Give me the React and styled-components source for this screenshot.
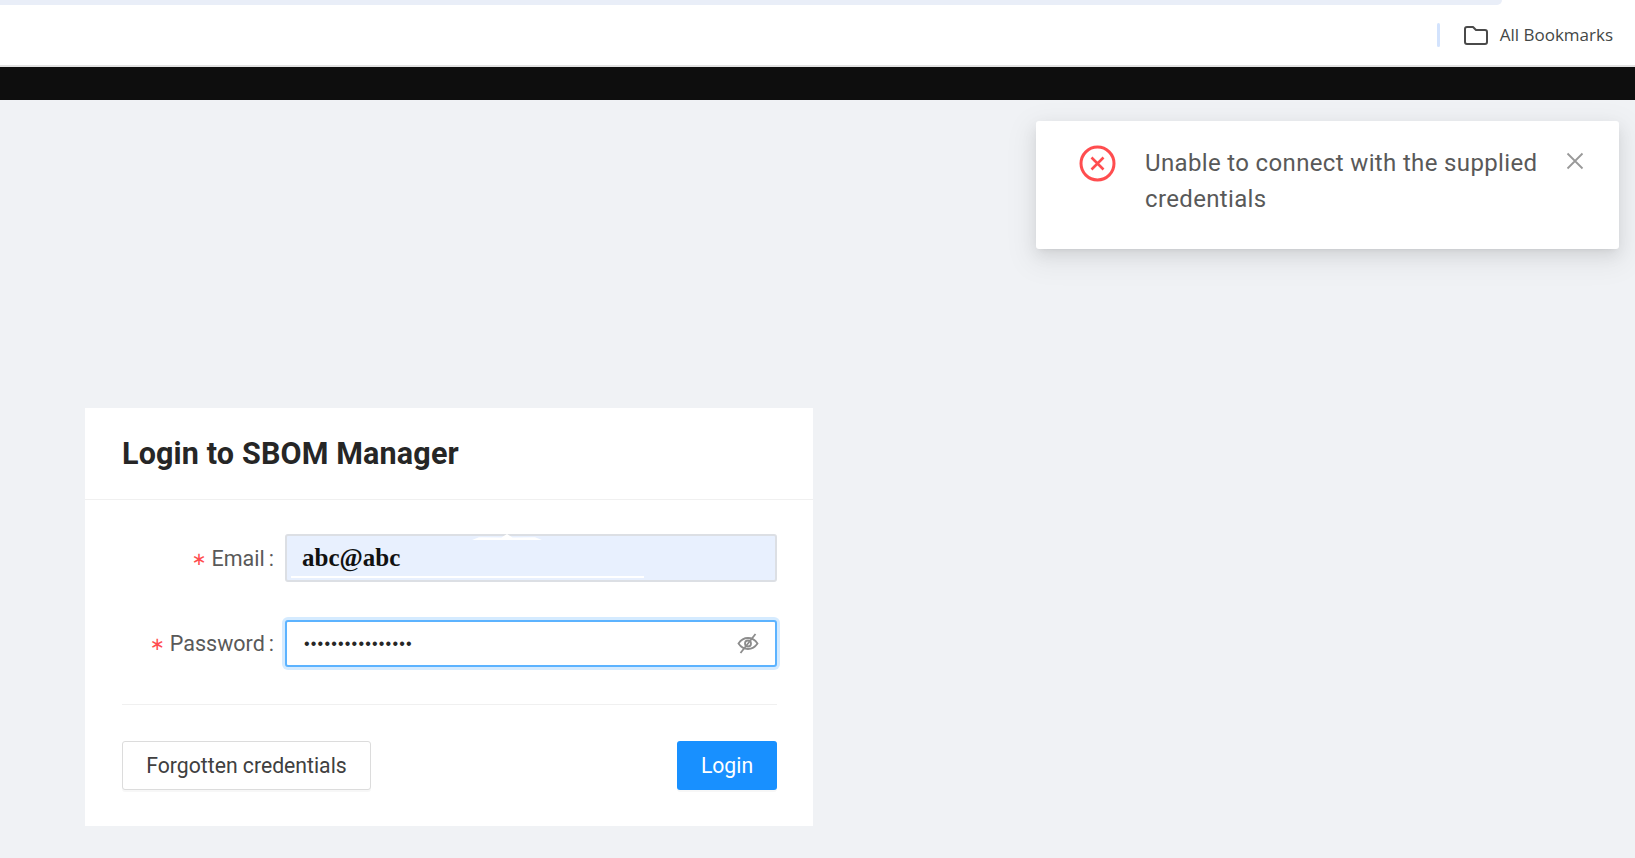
import React from "react";
import styled, { createGlobalStyle } from "styled-components";

const GlobalStyle = createGlobalStyle`
  html, body {
    margin: 0;
    padding: 0;
    background: #f0f2f5;
    font-family: Roboto, "Liberation Sans", sans-serif;
  }
  * {
    box-sizing: border-box;
  }
`;

const Page = styled.div`
  position: relative;
  width: 100%;
  min-height: 858px;
  overflow: hidden;
  background: #f0f2f5;
`;

const BrowserBar = styled.div`
  height: 67px;
  background: #fff;
  border-bottom: 2px solid #e2e2e2;
`;

const TabStrip = styled.div`
  width: 1502px;
  height: 5px;
  background: #e9eef8;
  border-bottom-right-radius: 14px;
`;

const BookmarkRow = styled.div`
  display: flex;
  justify-content: flex-end;
  align-items: center;
  height: 60px;
  padding-right: 22px;
`;

const Separator = styled.div`
  width: 3px;
  height: 24px;
  margin-right: 24px;
  border-radius: 2px;
  background: #d3e3fd;
`;

const BookmarkText = styled.span`
  margin-left: 12px;
  margin-bottom: 2px;
  font-family: "Open Sans", "Noto Sans", sans-serif;
  font-size: 17px;
  color: #444746;
`;

const BlackBar = styled.div`
  height: 33px;
  background: #0e0e0e;
`;

const Main = styled.main`
  padding: 308px 0 32px 85px;
`;

const Card = styled.section`
  width: 728px;
  background: #fff;
`;

const CardHeader = styled.header`
  display: flex;
  align-items: center;
  height: 92px;
  padding: 0 36px 0 37px;
  border-bottom: 1px solid #f0f0f0;
`;

const Title = styled.h1`
  margin: 0;
  font-size: 30.5px;
  font-weight: 700;
  letter-spacing: 0.15px;
  color: #262626;
`;

const CardBody = styled.div`
  padding: 34px 36px 36px 37px;
`;

const FormRow = styled.div`
  display: flex;
  align-items: center;
  gap: 11px;
  margin-bottom: ${(p) => (p.$last ? "37px" : "38px")};
`;

const Label = styled.label`
  flex: 0 0 152px;
  text-align: right;
  font-size: 21.5px;
  color: #595959;
`;

const Star = styled.span`
  margin-right: 5px;
  font-family: "DejaVu Sans", sans-serif;
  font-size: 18px;
  vertical-align: 1px;
  color: #ff4d4f;
`;

const Colon = styled.span`
  margin-left: 4px;
`;

const EmailField = styled.div`
  position: relative;
  flex: 1;
  height: 48px;
  background: #e8f0fe;
  border: 2px solid #dcdfe4;
  border-radius: 3px;

  /* white smudges left on the autofilled field */
  &::before {
    content: "";
    position: absolute;
    top: -2px;
    left: 185px;
    width: 70px;
    height: 6px;
    background: #fff;
    clip-path: polygon(0 100%, 10% 55%, 42% 60%, 50% 0, 58% 60%, 90% 55%, 100% 100%);
  }
  &::after {
    content: "";
    position: absolute;
    left: 4px;
    bottom: 2px;
    width: 353px;
    height: 2px;
    background: #fff;
  }
`;

const EmailInput = styled.input`
  width: 100%;
  height: 100%;
  padding: 0 15px;
  border: 0;
  outline: 0;
  background: transparent;
  font-family: "Liberation Serif", serif;
  font-size: 25px;
  font-weight: 700;
  color: #111;
`;

const PasswordField = styled.div`
  display: flex;
  align-items: center;
  flex: 1;
  height: 47px;
  padding: 0 16px 0 17px;
  background: #fff;
  border: 2px solid #5cb3ff;
  border-radius: 3px;
  box-shadow: 0 0 0 3px rgba(24, 144, 255, 0.18);
`;

const PasswordInput = styled.input`
  flex: 1;
  min-width: 0;
  padding: 0;
  border: 0;
  outline: 0;
  background: transparent;
  font-family: "Liberation Sans", sans-serif;
  font-size: 16px;
  letter-spacing: 1.2px;
  color: #262626;
`;

const Divider = styled.hr`
  margin: 0 0 36px;
  border: 0;
  border-top: 1px solid #f0f0f0;
`;

const Actions = styled.div`
  display: flex;
  justify-content: space-between;
`;

const Button = styled.button`
  height: 49px;
  padding: 0;
  width: ${(p) => (p.$primary ? "100px" : "249px")};
  background: ${(p) => (p.$primary ? "#1890ff" : "#fff")};
  border: ${(p) => (p.$primary ? "0" : "1.5px solid #dcdcdc")};
  border-radius: 3px;
  box-shadow: 0 2px 0 rgba(0, 0, 0, 0.03);
  font-family: inherit;
  font-size: 21.2px;
  color: ${(p) => (p.$primary ? "#fff" : "#404040")};
`;

const Toast = styled.div`
  position: absolute;
  top: 121px;
  right: 16px;
  display: flex;
  align-items: flex-start;
  width: 583px;
  height: 128px;
  padding: 24px 35px 0 43px;
  background: #fff;
  border-radius: 3px;
  box-shadow: 0 9px 28px 8px rgba(0, 0, 0, 0.05), 0 6px 16px 0 rgba(0, 0, 0, 0.08), 0 3px 6px -4px rgba(0, 0, 0, 0.12);
`;

const ToastText = styled.p`
  flex: 1;
  margin: 0 0 0 29px;
  font-size: 24px;
  line-height: 36px;
  letter-spacing: 0.35px;
  color: #595959;
`;

const CloseButton = styled.div`
  margin-top: 7px;
  margin-left: 27px;
  color: #999;
  line-height: 0;
`;

const FolderIcon = () => (
  <svg width="24" height="19" viewBox="0 0 24 19" fill="none" stroke="#4a4a4a" strokeWidth="2">
    <path d="M3 1h6l3 3h9a2 2 0 0 1 2 2v10a2 2 0 0 1-2 2H3a2 2 0 0 1-2-2V3a2 2 0 0 1 2-2z" strokeLinejoin="round" />
  </svg>
);

const ErrorIcon = () => (
  <svg width="37" height="37" viewBox="0 0 37 37" fill="none" stroke="#ff4d4f" strokeWidth="3">
    <circle cx="18.5" cy="18.5" r="16.5" />
    <path d="M12.5 12.5l12 12M24.5 12.5l-12 12" strokeWidth="2.6" />
  </svg>
);

const CloseIcon = () => (
  <svg width="18" height="18" viewBox="0 0 18 18" fill="none" stroke="currentColor" strokeWidth="1.8">
    <path d="M1.5 1.5l15 15M16.5 1.5l-15 15" />
  </svg>
);

const EyeOffIcon = () => (
  <svg width="22" height="22" viewBox="0 0 22 22" fill="none" stroke="#8c8c8c" strokeWidth="1.8">
    <path d="M1.5 10.5C4 6.800 7.200 5 11 5s7 1.800 9.500 5.500c-2.500 3.700-5.700 5.500-9.500 5.500s-7-1.800-9.500-5.500z" />
    <circle cx="11" cy="10.500" r="3" />
    <path d="M18.500 1L3.500 20" />
  </svg>
);

const App = () => {
  return (
    <Page>
      <GlobalStyle />
      <BrowserBar>
        <TabStrip />
        <BookmarkRow>
          <Separator />
          <FolderIcon />
          <BookmarkText>All Bookmarks</BookmarkText>
        </BookmarkRow>
      </BrowserBar>
      <BlackBar />
      <Main>
        <Card>
          <CardHeader>
            <Title>Login to SBOM Manager</Title>
          </CardHeader>
          <CardBody>
            <FormRow>
              <Label htmlFor="email">
                <Star>∗</Star>Email<Colon>:</Colon>
              </Label>
              <EmailField>
                <EmailInput id="email" defaultValue="abc@abc" />
              </EmailField>
            </FormRow>
            <FormRow $last>
              <Label htmlFor="password">
                <Star>∗</Star>Password<Colon>:</Colon>
              </Label>
              <PasswordField>
                <PasswordInput id="password" type="password" defaultValue="abcdefghijklmnop" />
                <EyeOffIcon />
              </PasswordField>
            </FormRow>
            <Divider />
            <Actions>
              <Button>Forgotten credentials</Button>
              <Button $primary>Login</Button>
            </Actions>
          </CardBody>
        </Card>
      </Main>
      <Toast>
        <ErrorIcon />
        <ToastText>Unable to connect with the supplied credentials</ToastText>
        <CloseButton>
          <CloseIcon />
        </CloseButton>
      </Toast>
    </Page>
  );
};

export default App;
